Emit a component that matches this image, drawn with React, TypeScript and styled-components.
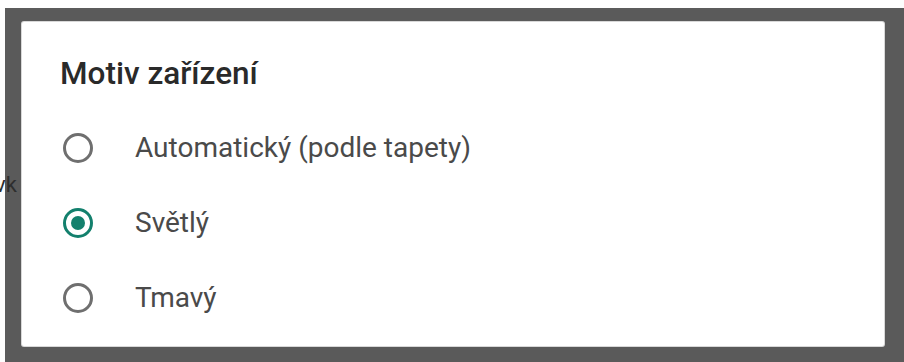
import React, { useState } from 'react';
import styled, { createGlobalStyle } from 'styled-components';

const GlobalStyle = createGlobalStyle`
  html, body {
    margin: 0;
    padding: 0;
    background: #fdfdfd;
    font-family: Roboto, "Noto Sans", "Liberation Sans", sans-serif;
  }
`;

const options = ['Automatický (podle tapety)', 'Světlý', 'Tmavý'];

const RadioIcon = ({ checked }: { checked: boolean }) => (
  <RadioSvg viewBox="0 0 32 32" aria-hidden>
    <circle
      cx="16"
      cy="16"
      r="13.5"
      fill="none"
      stroke={checked ? '#13806d' : '#6f6f6f'}
      strokeWidth="3"
    />
    {checked && <circle cx="16" cy="16" r="7" fill="#13806d" />}
  </RadioSvg>
);

const App = () => {
  const [selected, setSelected] = useState(1);

  return (
    <>
      <GlobalStyle />
      <Page>
        <BehindText>vk</BehindText>
        <Scrim>
          <Dialog>
            <Title>Motiv zařízení</Title>
            <OptionList>
              {options.map((label, index) => (
                <OptionRow key={label} onClick={() => setSelected(index)}>
                  <RadioIcon checked={selected === index} />
                  <OptionLabel>{label}</OptionLabel>
                </OptionRow>
              ))}
            </OptionList>
          </Dialog>
        </Scrim>
      </Page>
    </>
  );
};

const Page = styled.div`
  position: relative;
  width: 904px;
  height: 362px;
  padding: 8px 0 0 5px;
  box-sizing: border-box;
  overflow: hidden;
`;

// text of the page underneath, showing through the scrim
const BehindText = styled.span`
  position: absolute;
  left: -5px;
  top: 172px;
  font-size: 22px;
  color: #2e2e2e;
  z-index: 1;
`;

const Scrim = styled.div`
  height: 100%;
  padding: 14px 20px 16px 17px;
  box-sizing: border-box;
  background: #5a5a5a;
  display: flex;
`;

const Dialog = styled.div`
  flex: 1;
  background: #ffffff;
  border-radius: 2px;
  box-shadow: 0 0 0 1px #d8d8d8;
  padding: 34px 0 11px 0;
  display: flex;
  flex-direction: column;
`;

const Title = styled.h2`
  margin: 0 0 18px 38px;
  font-size: 31.5px;
  line-height: 36px;
  font-weight: 500;
  color: #2a2a2a;
`;

const OptionList = styled.div`
  display: flex;
  flex-direction: column;
`;

const OptionRow = styled.label`
  height: 75px;
  display: flex;
  align-items: center;
  gap: 41px;
  padding-left: 40px;
  cursor: pointer;
`;

const RadioSvg = styled.svg`
  width: 32px;
  height: 32px;
  flex-shrink: 0;
`;

const OptionLabel = styled.span`
  font-size: 28px;
  color: #4a4a4a;
`;

export default App;
